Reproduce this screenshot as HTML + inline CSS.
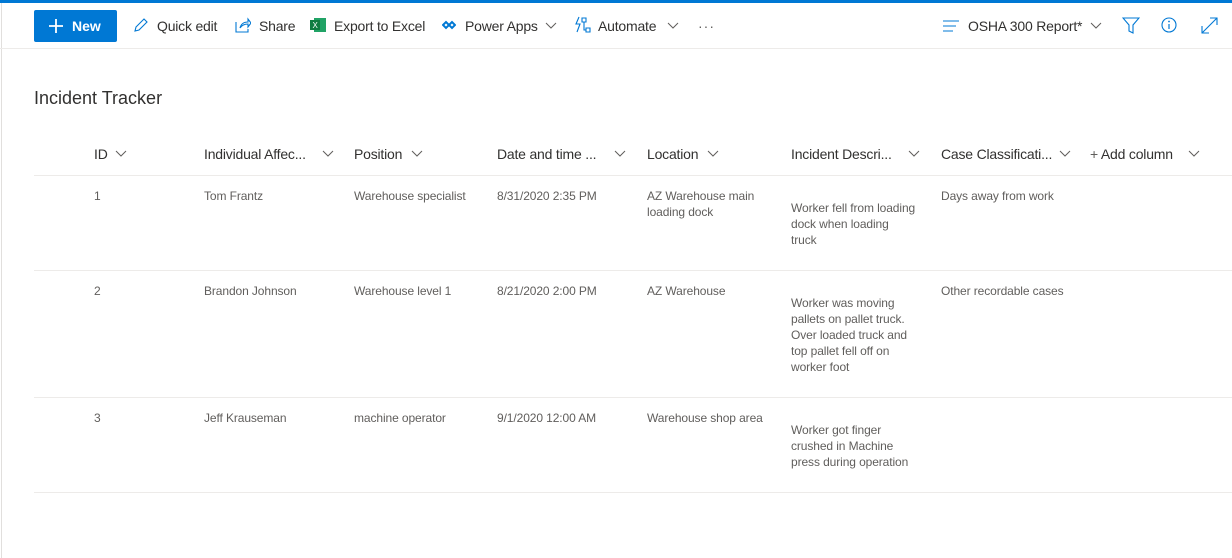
<!DOCTYPE html>
<html><head><meta charset="utf-8"><style>
*{margin:0;padding:0;box-sizing:border-box}
body{width:1232px;height:558px;overflow:hidden;background:#fff;font-family:"Liberation Sans",sans-serif;color:#323130;position:relative}
.top{position:absolute;left:0;top:0;width:1232px;height:3px;background:#0078d4}
.lb{position:absolute;left:1px;top:3px;width:1px;height:555px;background:#e1dfdd}
.cmd{position:absolute;left:0;top:3px;width:1232px;height:46px;border-bottom:1px solid #edebe9}
.a{position:absolute;font-size:14px;top:18px;white-space:nowrap;letter-spacing:-0.2px}
.new{position:absolute;left:34px;top:10px;width:83px;height:32px;background:#0078d4;border-radius:2px;color:#fff;font-weight:bold;font-size:14px}
.t{position:absolute;font-size:12px;line-height:16px;color:#605e5c;white-space:nowrap;letter-spacing:-0.1px}
.h{position:absolute;top:146px;font-size:14px;color:#323130;white-space:nowrap;letter-spacing:-0.2px}
.ln{position:absolute;left:34px;width:1198px;height:1px;background:#edebe9}
svg{position:absolute}
</style></head><body>
<div class="top"></div><div class="lb"></div>
<div class="cmd"></div>
<div class="new"><svg style="left:14px;top:8px" width="16" height="16"><path d="M8 1v14M1 8h14" stroke="#fff" stroke-width="1.8"/></svg><span style="position:absolute;left:38px;top:8px">New</span></div>
<svg style="left:133px;top:17px" width="16" height="16"><path d="M2 14l1-4 8-8 3 3-8 8z" fill="none" stroke="#0078d4" stroke-width="1.1"/></svg>
<div class="a" style="left:157px">Quick edit</div>
<svg style="left:235px;top:17px" width="16" height="16"><path d="M1 5v10h12v-3M5 11c1-4 4-6 8-6V2l3 4-3 4V7c-3 0-6 1-8 4z" fill="none" stroke="#0078d4" stroke-width="1.1"/></svg>
<div class="a" style="left:259px">Share</div>
<svg style="left:310px;top:17px" width="16" height="16"><rect x="4" y="1" width="12" height="14" fill="#21a366"/><rect x="0" y="3" width="10" height="10" fill="#107c41"/><text x="2.5" y="11" font-size="8" fill="#fff" font-family="Liberation Sans">X</text></svg>
<div class="a" style="left:334px">Export to Excel</div>
<svg style="left:442px;top:19px" width="14" height="12"><path d="M1 6l3-3 3 3-3 3zM7 6l3-3 3 3-3 3z" fill="none" stroke="#0078d4" stroke-width="2"/></svg>
<div class="a" style="left:465px">Power Apps</div>
<svg style="left:545px;top:22px" width="12" height="8"><path d="M1 1l5 5 5-5" fill="none" stroke="#605e5c"/></svg>
<svg style="left:574px;top:16px" width="18" height="18"><path d="M5 1L2 8h4l-3 8M8 2h4v4H8zM12 12h4v4h-4zM10 6v8h2" fill="none" stroke="#0078d4" stroke-width="1.1"/></svg>
<div class="a" style="left:598px">Automate</div>
<svg style="left:667px;top:22px" width="12" height="8"><path d="M1 1l5 5 5-5" fill="none" stroke="#605e5c"/></svg>
<div class="a" style="left:698px;top:18px;color:#605e5c;letter-spacing:1px">···</div>
<svg style="left:943px;top:20px" width="16" height="12"><path d="M0 1h16M0 6h13M0 11h10" stroke="#0078d4" stroke-width="1.1"/></svg>
<div class="a" style="left:968px">OSHA 300 Report*</div>
<svg style="left:1090px;top:22px" width="12" height="8"><path d="M1 1l5 5 5-5" fill="none" stroke="#605e5c"/></svg>
<svg style="left:1122px;top:17px" width="18" height="18"><path d="M1 1h16l-6 7v8l-4-2V8z" fill="none" stroke="#0078d4" stroke-width="1.1"/></svg>
<svg style="left:1161px;top:17px" width="18" height="18"><circle cx="8" cy="8" r="7" fill="none" stroke="#0078d4" stroke-width="1.1"/><path d="M8 7v5" stroke="#0078d4" stroke-width="1.2"/><circle cx="8" cy="4.5" r=".9" fill="#0078d4"/></svg>
<svg style="left:1201px;top:17px" width="18" height="18"><path d="M1 16L16 1M9 1h7v7M1 9v7h7" fill="none" stroke="#0078d4" stroke-width="1.1"/></svg>

<div style="position:absolute;left:34px;top:88px;font-size:18px;color:#323130">Incident Tracker</div>

<div class="h" style="left:94px">ID</div>
<div class="h" style="left:204px">Individual Affec...</div>
<div class="h" style="left:354px">Position</div>
<div class="h" style="left:497px">Date and time ...</div>
<div class="h" style="left:647px">Location</div>
<div class="h" style="left:791px">Incident Descri...</div>
<div class="h" style="left:941px">Case Classificati...</div>
<div class="h" style="left:1090px"><span style="color:#605e5c">+</span> Add column</div>
<svg style="left:115px;top:150px" width="12" height="8"><path d="M1 1l5 5 5-5" fill="none" stroke="#605e5c"/></svg>
<svg style="left:322px;top:150px" width="12" height="8"><path d="M1 1l5 5 5-5" fill="none" stroke="#605e5c"/></svg>
<svg style="left:411px;top:150px" width="12" height="8"><path d="M1 1l5 5 5-5" fill="none" stroke="#605e5c"/></svg>
<svg style="left:614px;top:150px" width="12" height="8"><path d="M1 1l5 5 5-5" fill="none" stroke="#605e5c"/></svg>
<svg style="left:707px;top:150px" width="12" height="8"><path d="M1 1l5 5 5-5" fill="none" stroke="#605e5c"/></svg>
<svg style="left:908px;top:150px" width="12" height="8"><path d="M1 1l5 5 5-5" fill="none" stroke="#605e5c"/></svg>
<svg style="left:1059px;top:150px" width="12" height="8"><path d="M1 1l5 5 5-5" fill="none" stroke="#605e5c"/></svg>
<svg style="left:1188px;top:150px" width="12" height="8"><path d="M1 1l5 5 5-5" fill="none" stroke="#605e5c"/></svg>
<div class="ln" style="top:175px"></div>

<div class="t" style="left:94px;top:188px">1</div>
<div class="t" style="left:204px;top:188px">Tom Frantz</div>
<div class="t" style="left:354px;top:188px">Warehouse specialist</div>
<div class="t" style="left:497px;top:188px">8/31/2020 2:35 PM</div>
<div class="t" style="left:647px;top:188px">AZ Warehouse main<br>loading dock</div>
<div class="t" style="left:791px;top:200px">Worker fell from loading<br>dock when loading<br>truck</div>
<div class="t" style="left:941px;top:188px">Days away from work</div>
<div class="ln" style="top:270px"></div>

<div class="t" style="left:94px;top:283px">2</div>
<div class="t" style="left:204px;top:283px">Brandon Johnson</div>
<div class="t" style="left:354px;top:283px">Warehouse level 1</div>
<div class="t" style="left:497px;top:283px">8/21/2020 2:00 PM</div>
<div class="t" style="left:647px;top:283px">AZ Warehouse</div>
<div class="t" style="left:791px;top:295px">Worker was moving<br>pallets on pallet truck.<br>Over loaded truck and<br>top pallet fell off on<br>worker foot</div>
<div class="t" style="left:941px;top:283px">Other recordable cases</div>
<div class="ln" style="top:397px"></div>

<div class="t" style="left:94px;top:410px">3</div>
<div class="t" style="left:204px;top:410px">Jeff Krauseman</div>
<div class="t" style="left:354px;top:410px">machine operator</div>
<div class="t" style="left:497px;top:410px">9/1/2020 12:00 AM</div>
<div class="t" style="left:647px;top:410px">Warehouse shop area</div>
<div class="t" style="left:791px;top:422px">Worker got finger<br>crushed in Machine<br>press during operation</div>
<div class="ln" style="top:492px"></div>
</body></html>
